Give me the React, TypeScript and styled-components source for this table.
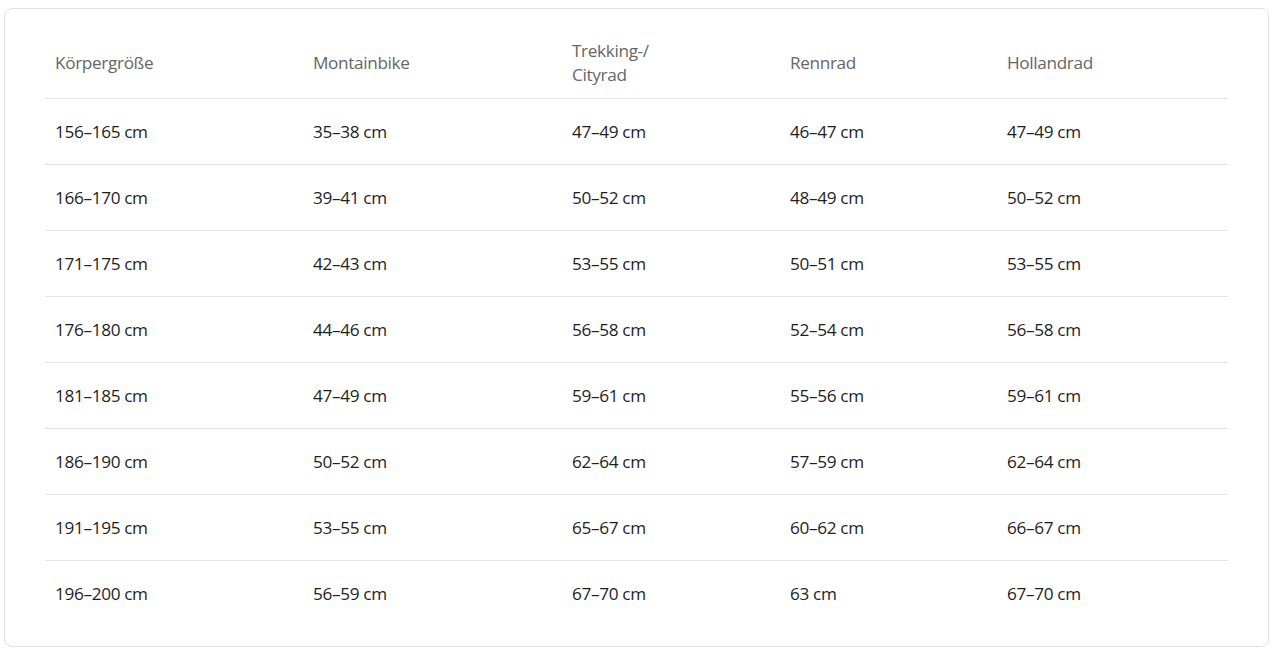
import React from "react";
import styled, { createGlobalStyle } from "styled-components";

const Global = createGlobalStyle`
  html, body { margin: 0; padding: 0; background: #ffffff; }
  body { font-family: "Open Sans", "Noto Sans", sans-serif; }
`;

const Page = styled.div`
  padding: 8px 10px 7px 4px;
`;

const Card = styled.div`
  border: 1px solid #e2e2e2;
  border-radius: 8px;
  padding: 25px 40px 20px 40px;
  background: #fff;
`;

const Table = styled.table`
  width: 100%;
  border-collapse: collapse;
  table-layout: fixed;
`;

const Col = styled.col<{ $w: number }>`
  width: ${(p) => p.$w}px;
`;

const Th = styled.th`
  text-align: left;
  font-weight: 400;
  font-size: 17.2px;
  letter-spacing: -0.35px;
  line-height: 24px;
  color: #666;
  padding: 5px 10px 11px 10px;
  height: 48px;
  vertical-align: middle;
  border-bottom: 1px solid #e4e4e4;
`;

const Td = styled.td<{ $last?: boolean }>`
  font-size: 17.2px;
  letter-spacing: -0.35px;
  line-height: 24px;
  color: #1e1e1e;
  padding: 1px 10px 1px 10px;
  height: 63px;
  vertical-align: middle;
  border-bottom: ${(p) => (p.$last ? "none" : "1px solid #e4e4e4")};
`;

const headers = ["Körpergröße", "Montainbike", "Trekking-/\nCityrad", "Rennrad", "Hollandrad"];
const rows = [
  ["156–165 cm", "35–38 cm", "47–49 cm", "46–47 cm", "47–49 cm"],
  ["166–170 cm", "39–41 cm", "50–52 cm", "48–49 cm", "50–52 cm"],
  ["171–175 cm", "42–43 cm", "53–55 cm", "50–51 cm", "53–55 cm"],
  ["176–180 cm", "44–46 cm", "56–58 cm", "52–54 cm", "56–58 cm"],
  ["181–185 cm", "47–49 cm", "59–61 cm", "55–56 cm", "59–61 cm"],
  ["186–190 cm", "50–52 cm", "62–64 cm", "57–59 cm", "62–64 cm"],
  ["191–195 cm", "53–55 cm", "65–67 cm", "60–62 cm", "66–67 cm"],
  ["196–200 cm", "56–59 cm", "67–70 cm", "63 cm", "67–70 cm"],
];
const widths = [258, 259, 218, 217, 231];

export default function App() {
  return (
    <>
      <Global />
      <Page>
        <Card>
          <Table>
            <colgroup>
              {widths.map((w, i) => (
                <Col key={i} $w={w} />
              ))}
            </colgroup>
            <thead>
              <tr>
                {headers.map((h, i) => (
                  <Th key={i}>
                    {h.split("\n").map((l, j) => (
                      <React.Fragment key={j}>
                        {j > 0 && <br />}
                        {l}
                      </React.Fragment>
                    ))}
                  </Th>
                ))}
              </tr>
            </thead>
            <tbody>
              {rows.map((r, i) => (
                <tr key={i}>
                  {r.map((c, j) => (
                    <Td key={j} $last={i === rows.length - 1}>
                      {c}
                    </Td>
                  ))}
                </tr>
              ))}
            </tbody>
          </Table>
        </Card>
      </Page>
    </>
  );
}
